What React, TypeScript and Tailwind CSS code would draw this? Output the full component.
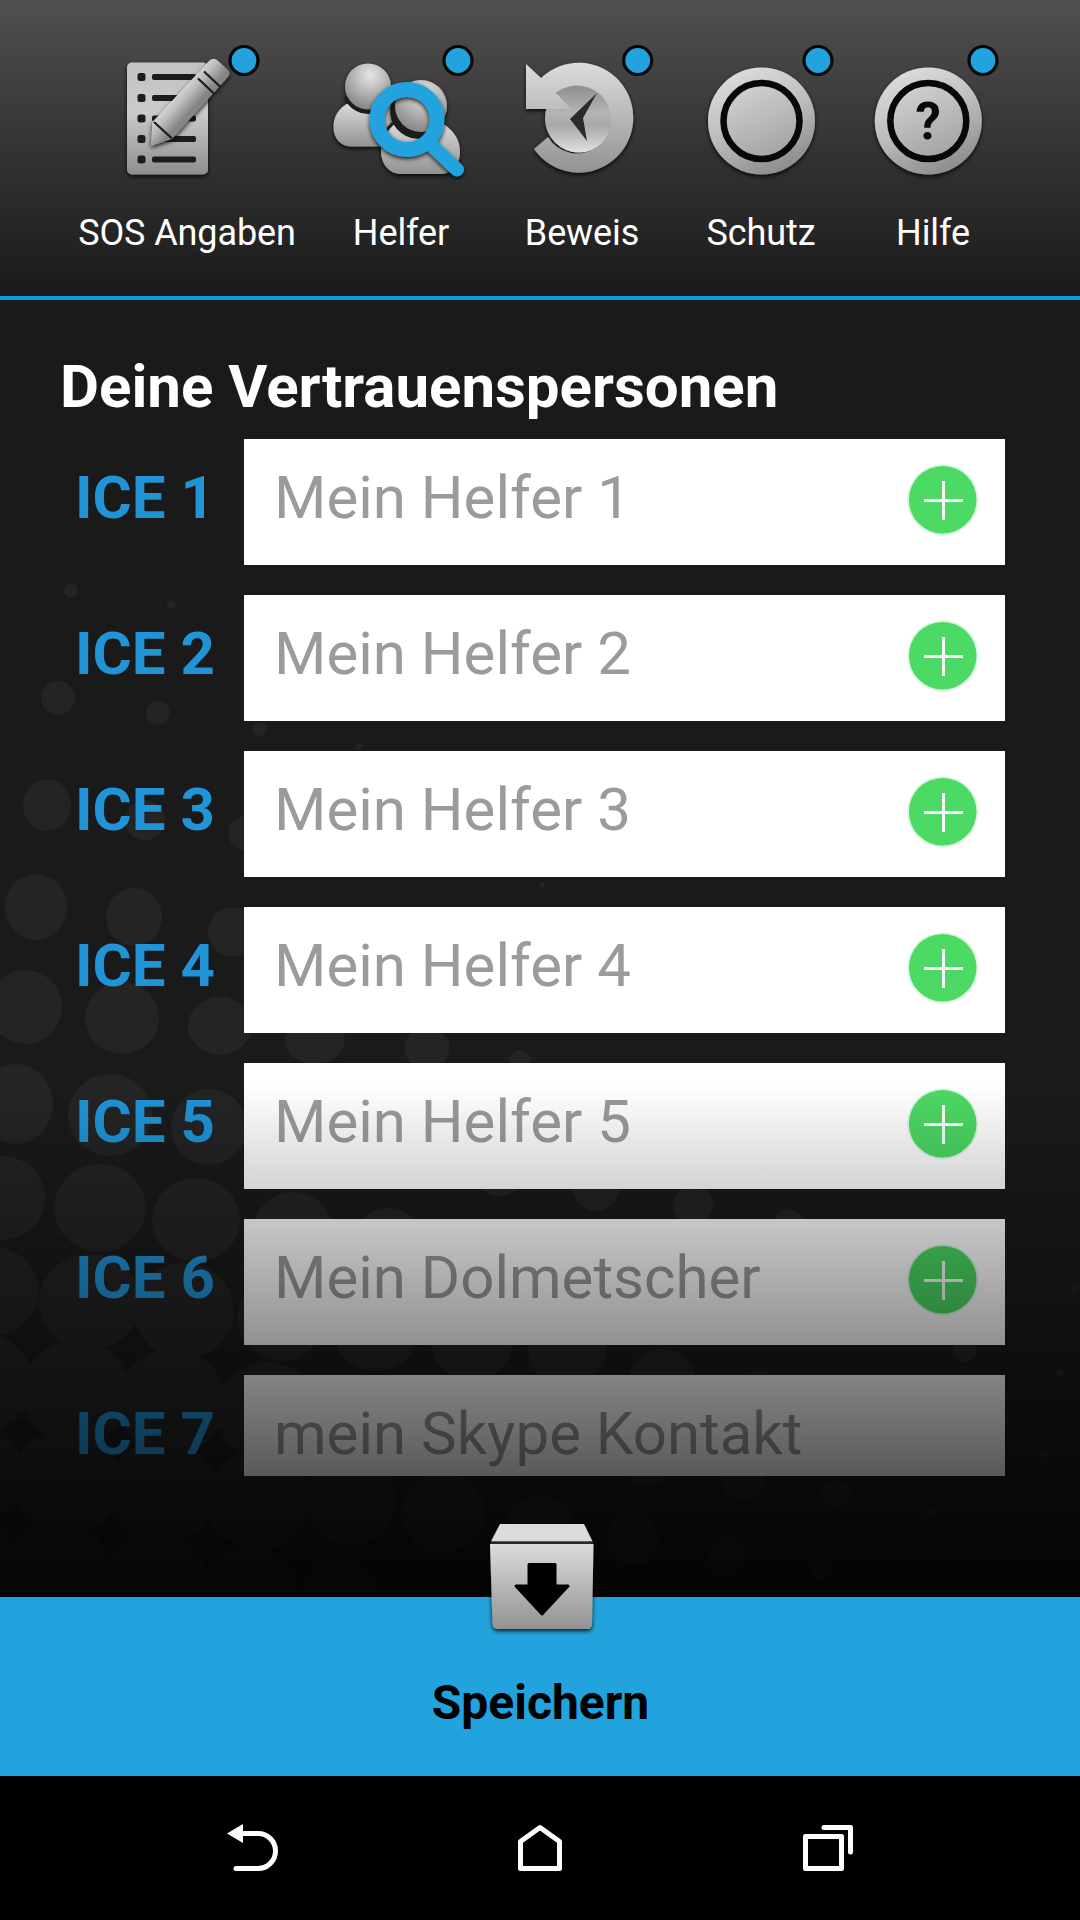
import type { ReactNode } from 'react';

const KONTAKTE = [
  { label: 'ICE 1', platzhalter: 'Mein Helfer 1' },
  { label: 'ICE 2', platzhalter: 'Mein Helfer 2' },
  { label: 'ICE 3', platzhalter: 'Mein Helfer 3' },
  { label: 'ICE 4', platzhalter: 'Mein Helfer 4' },
  { label: 'ICE 5', platzhalter: 'Mein Helfer 5' },
  { label: 'ICE 6', platzhalter: 'Mein Dolmetscher' },
  { label: 'ICE 7', platzhalter: 'mein Skype Kontakt', ohneButton: true },
];

// Halftone dots of the backdrop: [cx, cy, rx, ry]
const PUNKTE = [
  [71, 590, 7, 7], [171, 605, 4, 4],
  [58, 698, 17, 17], [158, 713, 12, 12], [259, 729, 7, 7], [359, 746, 3, 3],
  [47, 805, 24, 26], [145, 820, 20, 20], [245, 833, 17, 17], [542, 885, 3, 3],
  [36, 907, 31, 33], [134, 917, 28, 29], [233, 932, 25, 25],
  [25, 1007, 37, 37], [122, 1018, 37, 36], [220, 1026, 32, 29], [315, 1040, 30, 24], [427, 1048, 23, 20], [520, 1060, 11, 10],
  [16, 1104, 37, 40], [110, 1115, 42, 41], [209, 1127, 38, 38], [499, 1175, 23, 21], [596, 1189, 23, 22], [693, 1205, 20, 19], [789, 1221, 14, 12],
  [2, 1198, 43, 42], [100, 1208, 46, 44], [196, 1220, 44, 42], [293, 1231, 40, 39], [389, 1241, 34, 33],
  [-8, 1291, 47, 44], [90, 1302, 51, 48], [184, 1311, 50, 48], [281, 1318, 44, 43], [376, 1329, 43, 42], [472, 1340, 41, 41], [567, 1350, 39, 38],
  [662, 1383, 34, 34], [757, 1397, 26, 26], [965, 1350, 12, 12], [1060, 1373, 4, 4], [1043, 1454, 4, 4], [1075, 1288, 4, 4],
  [-20, 1383, 53, 51], [76, 1392, 54, 52], [172, 1402, 54, 52], [268, 1412, 52, 50], [364, 1422, 47, 46],
  [-30, 1472, 54, 51], [66, 1482, 55, 52], [162, 1492, 55, 52], [258, 1500, 52, 50], [350, 1500, 46, 45], [443, 1513, 42, 40], [540, 1528, 35, 33],
  [647, 1462, 24, 24], [743, 1478, 22, 22], [836, 1494, 15, 14], [931, 1513, 6, 6],
  [-38, 1564, 55, 51], [58, 1574, 55, 51], [154, 1582, 54, 49], [248, 1590, 47, 45], [338, 1596, 38, 36],
  [633, 1540, 26, 26], [727, 1556, 19, 19], [821, 1571, 10, 9],
];

function Punkt({ cx }: { cx: number }) {
  return <circle cx={cx} cy="60.500" r="14" fill="#22a3dd" stroke="#05080b" strokeWidth="3.2" />;
}

function MenuePunkt({ text, breite, children }: { text: string; breite: string; children: ReactNode }) {
  return (
    <button className={`flex shrink-0 flex-col items-center pt-10 ${breite}`}>
      {children}
      <span className="mt-8 whitespace-nowrap text-[36px] leading-[42px] tracking-[-0.1px] text-white">{text}</span>
    </button>
  );
}

function Verlaeufe() {
  return (
    <svg className="absolute size-0" aria-hidden="true">
      <defs>
        <linearGradient id="metall" x1="0" y1="0" x2="0" y2="1">
          <stop offset="0" stopColor="#dcdcdc" />
          <stop offset="1" stopColor="#929292" />
        </linearGradient>
        <linearGradient id="blatt" x1="0" y1="0" x2="0" y2="1">
          <stop offset="0" stopColor="#c2c2c2" />
          <stop offset="0.45" stopColor="#cbcbcb" />
          <stop offset="1" stopColor="#8d8d8d" />
        </linearGradient>
        <linearGradient id="stift" gradientUnits="userSpaceOnUse" x1="175" y1="90" x2="194" y2="107">
          <stop offset="0" stopColor="#e0e0e0" />
          <stop offset="0.5" stopColor="#bdbdbd" />
          <stop offset="1" stopColor="#858585" />
        </linearGradient>
        <linearGradient id="knopf" x1="0.25" y1="0" x2="0.7" y2="1">
          <stop offset="0" stopColor="#dedede" />
          <stop offset="0.5" stopColor="#bcbcbc" />
          <stop offset="1" stopColor="#8a8a8a" />
        </linearGradient>
        <linearGradient id="knopfInnen" x1="0.25" y1="0" x2="0.7" y2="1">
          <stop offset="0" stopColor="#d2d2d2" />
          <stop offset="1" stopColor="#a2a2a2" />
        </linearGradient>
        <radialGradient id="kopf" cx="0.55" cy="0.25" r="0.8">
          <stop offset="0" stopColor="#e6e6e6" />
          <stop offset="1" stopColor="#808080" />
        </radialGradient>
        <linearGradient id="uhr" x1="0" y1="0" x2="0" y2="1">
          <stop offset="0" stopColor="#8d8d8d" />
          <stop offset="0.42" stopColor="#b5b5b5" />
          <stop offset="0.6" stopColor="#a8a8a8" />
          <stop offset="1" stopColor="#e0e0e0" />
        </linearGradient>
        <filter id="schatten" x="-20%" y="-20%" width="140%" height="150%">
          <feDropShadow dx="0" dy="2" stdDeviation="2" floodColor="#000" floodOpacity="0.85" />
        </filter>
      </defs>
    </svg>
  );
}

function AngabenIcon() {
  return (
    <svg className="shrink-0" width="160" height="140" viewBox="107 40 160 140">
      <rect x="127" y="62.500" width="81" height="112" rx="5" fill="url(#blatt)" filter="url(#schatten)" />
      {[77, 98, 118.5, 139, 159.5].map((y) => (
        <g key={y} fill="#1c1c1c">
          <rect x="137.500" y={y - 4} width="8" height="8" rx="2.500" />
          <rect x="152" y={y - 3} width="44" height="6" rx="2" />
        </g>
      ))}
      <g filter="url(#schatten)">
        <path d="M151 146 L152.500 122 L209 61 Q213 57 217 60 L228 70 Q231 73 228 77 L172 139 Z" fill="url(#stift)" />
      </g>
      <path d="M154 122 L172 138.500 M198 78.500 L214 93.500 M204 71.500 L220 86.500" stroke="#1c1c1c" strokeWidth="2.2" />
      <Punkt cx={244} />
    </svg>
  );
}

function HelferIcon() {
  return (
    <svg className="shrink-0" width="160" height="140" viewBox="321 40 160 140">
      <g filter="url(#schatten)">
        <path d="M349 103 C338 108 333.500 117 333.500 127 C333.500 139 341 146.500 352 146.500 H393 V104 Z" fill="url(#metall)" />
        <path d="M344 97 A25.500 25.500 0 0 0 392 97 Z" fill="#1d1d1d" />
        <circle cx="368" cy="86.500" r="23" fill="url(#kopf)" />
      </g>
      <g filter="url(#schatten)">
        <path d="M396 121 C385 130 381 141 381 151 C381 165 390 174 401 174 H441 C452 174 460 164 460 152 C460 141 455 132 445 125 Z" fill="url(#metall)" />
        <path d="M396 121 C390 125 386 131 384 137" fill="none" stroke="#1d1d1d" strokeWidth="3" />
        <path d="M393 98 A28 28 0 0 0 444 123 Z" fill="#1d1d1d" />
        <circle cx="421" cy="106" r="26" fill="url(#kopf)" />
      </g>
      <g filter="url(#schatten)" fill="none" stroke="#22a3dd">
        <circle cx="407" cy="119.500" r="30" strokeWidth="15" />
        <path d="M431 145 L457 169.500" strokeWidth="14" strokeLinecap="round" />
      </g>
      <Punkt cx={458} />
    </svg>
  );
}

function BeweisIcon() {
  return (
    <svg className="shrink-0" width="160" height="140" viewBox="502 40 160 140">
      <g filter="url(#schatten)">
        <circle cx="579" cy="118.500" r="34" fill="url(#uhr)" />
        <path d="M541 78 A54.500 55 0 1 1 534 149 L548 137 A34 34 0 1 0 556 93 L571 109 H526 V64 Z" fill="url(#metall)" />
      </g>
      <path d="M597 93 L570 119 L587 141 L583 118 Z" fill="#2b2b2b" />
      <Punkt cx={637.7} />
    </svg>
  );
}

function KnopfIcon({ cx, ursprung, zeichen, punkt }: { cx: number; ursprung: number; zeichen?: string; punkt: number }) {
  return (
    <svg className="shrink-0" width="160" height="140" viewBox={`${ursprung} 40 160 140`}>
      <circle cx={cx} cy="121" r="53.500" fill="url(#knopf)" filter="url(#schatten)" />
      <circle cx={cx} cy="121" r="38" fill="url(#knopfInnen)" stroke="#080808" strokeWidth="6.5" />
      {zeichen && (
        <text x={cx} y="138.500" textAnchor="middle" fontSize="51" fontWeight="700" fill="#080808">
          {zeichen}
        </text>
      )}
      <Punkt cx={punkt} />
    </svg>
  );
}

function PlusIcon() {
  return (
    <svg className="mt-[23px] mr-6 shrink-0" width="76" height="76" viewBox="0 0 76 76">
      <circle cx="37.700" cy="37.700" r="35.500" fill="#4cd964" opacity="0.2" />
      <circle cx="37.700" cy="37.700" r="33.800" fill="#4cd964" />
      <path d="M19 38.500 H58 M38.500 19 V58" stroke="#fff" strokeWidth="3" />
    </svg>
  );
}

export default function App() {
  return (
    <div className="flex h-[1920px] w-[1080px] flex-col overflow-hidden bg-black font-[Roboto,sans-serif]">
      <Verlaeufe />

      <header className="flex h-[300px] shrink-0 border-b-4 border-[#0f9ad8] bg-linear-to-b from-[#505050] to-[#1b1a1b] pl-20">
        <MenuePunkt text="SOS Angaben" breite="w-[214px]">
          <AngabenIcon />
        </MenuePunkt>
        <MenuePunkt text="Helfer" breite="w-[214px]">
          <HelferIcon />
        </MenuePunkt>
        <MenuePunkt text="Beweis" breite="w-[148px]">
          <BeweisIcon />
        </MenuePunkt>
        <MenuePunkt text="Schutz" breite="w-[210px]">
          <KnopfIcon cx={761.5} ursprung={681} punkt={818} />
        </MenuePunkt>
        <MenuePunkt text="Hilfe" breite="w-[134px]">
          <KnopfIcon cx={928.3} ursprung={853} zeichen="?" punkt={983} />
        </MenuePunkt>
      </header>

      <main className="relative h-[1297px] shrink-0 overflow-hidden bg-[#1a1a1a]">
        <svg className="absolute inset-0" width="1080" height="1297" viewBox="0 300 1080 1297" fill="#242424">
          {PUNKTE.map(([cx, cy, rx, ry]) => (
            <ellipse key={`${cx}-${cy}`} cx={cx} cy={cy} rx={rx} ry={ry} />
          ))}
        </svg>

        <div className="relative flex flex-col">
          <h1 className="mt-[52px] h-[87px] pl-[60px] text-[60px] font-bold leading-[70px] text-white">
            Deine Vertrauenspersonen
          </h1>
          <div className="flex h-[1037px] flex-col gap-[30px] overflow-hidden">
            {KONTAKTE.map((k) => (
              <div key={k.label} className="flex h-[126px] shrink-0 pl-[75px] text-[60px] leading-[70px]">
                <span className="w-[169px] pt-6 font-bold text-[#2094d7]">{k.label}</span>
                <div className="flex w-[761px] justify-between bg-white pl-[30px]">
                  <span className="whitespace-nowrap pt-6 text-[#9b9b9b]">{k.platzhalter}</span>
                  {!k.ohneButton && <PlusIcon />}
                </div>
              </div>
            ))}
          </div>
        </div>

        {/* fade towards the save bar */}
        <div className="pointer-events-none absolute inset-x-0 bottom-0 h-[512px] bg-linear-to-b from-black/0 to-black/85" />
      </main>

      <button className="relative flex h-[179px] shrink-0 justify-center bg-[#22a3dd] pt-[78px]">
        <svg className="absolute -top-20 left-[482px]" width="120" height="120" viewBox="482 1517 120 120">
          <g filter="url(#schatten)">
            <path d="M500 1524 H584 L592.500 1541.500 H491 Z" fill="#dcdcdc" />
            <path d="M490 1544 H593.500 L592 1624 Q592 1629 587 1629 H498 Q493 1629 492.500 1624 Z" fill="url(#metall)" />
          </g>
          <path d="M491 1541.500 H593 V1544 H491 Z" fill="#2a2a2a" />
          <path
            d="M529 1564.500 H555 V1586 H568 L542 1614 L516 1586 H529 Z"
            fill="#000"
            stroke="#000"
            strokeWidth="3"
            strokeLinejoin="round"
          />
        </svg>
        <span className="pl-px text-[48px] font-bold leading-[56px] text-black">Speichern</span>
      </button>

      <nav className="flex h-36 shrink-0 items-center justify-between bg-black px-[220px]">
        <svg width="64" height="64" viewBox="220 1816 64 64" fill="none" stroke="#fff" strokeWidth="5" strokeLinecap="round">
          <path d="M242 1833.500 H258 A17.500 17.500 0 0 1 258 1868.500 H236" />
          <path d="M227 1833.500 L243 1824 V1843 Z" fill="#fff" stroke="none" />
        </svg>
        <svg width="64" height="64" viewBox="508 1816 64 64" fill="none" stroke="#fff" strokeWidth="5" strokeLinejoin="round">
          <path d="M540 1827.500 L559.500 1841.500 V1868.500 H520.500 V1841.500 Z" />
        </svg>
        <svg width="64" height="64" viewBox="796 1816 64 64" fill="none" stroke="#fff" strokeWidth="5" strokeLinejoin="round" strokeLinecap="round">
          <path d="M805.500 1836.500 H841.500 V1868.500 H805.500 Z M824 1827.500 H850.500 V1852" />
        </svg>
      </nav>
    </div>
  );
}
